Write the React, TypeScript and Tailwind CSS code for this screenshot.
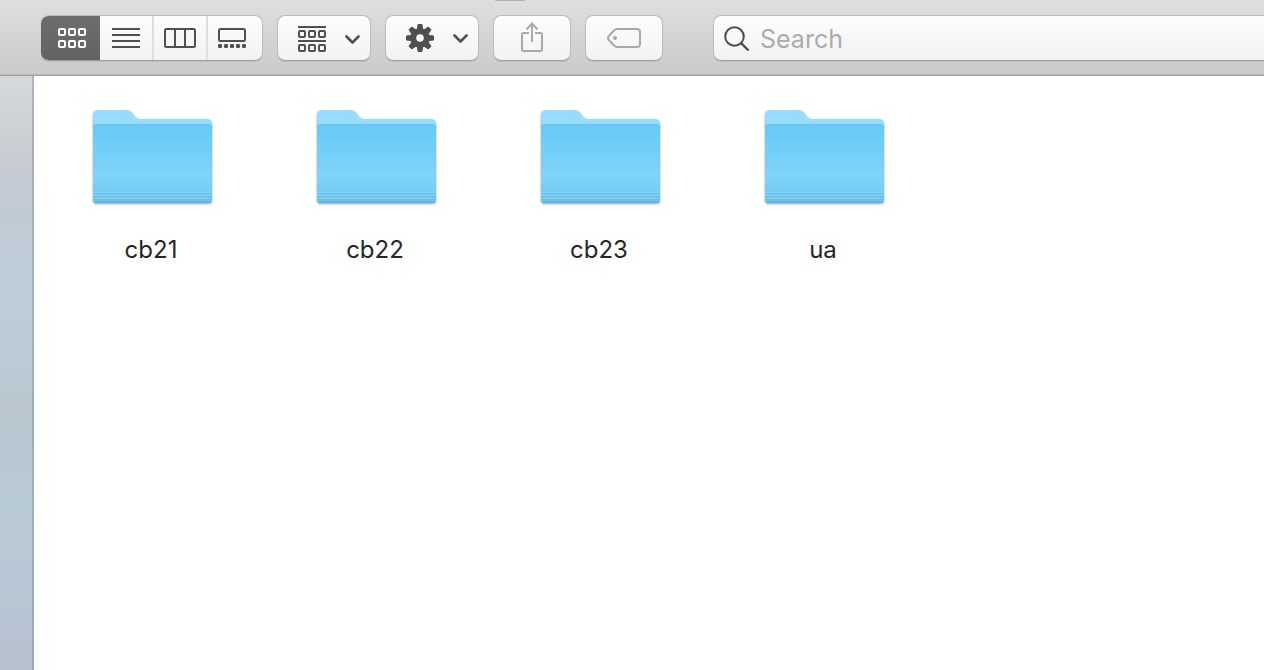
import React from "react";

const panel =
  "flex h-[46px] shrink-0 items-center rounded-lg border border-[#bcbcbc] border-b-[#a0a0a0] bg-linear-to-b from-[#fdfdfd] to-[#f2f2f2] bg-clip-padding shadow-[0_1px_1px_rgba(0,0,0,0.08)]";

function Squares({ y }: { y: number }) {
  return (
    <>
      {[1, 11, 21].map((x) => (
        <rect key={x} x={x} y={y} width="6" height="6" rx="1" />
      ))}
    </>
  );
}

function GridIcon() {
  return (
    <svg width="28" height="20" fill="none" stroke="currentColor" strokeWidth="2" aria-hidden="true">
      <Squares y={1} />
      <Squares y={13} />
    </svg>
  );
}

function ListIcon() {
  return (
    <svg width="28" height="20" stroke="currentColor" strokeWidth="2" aria-hidden="true">
      <path d="M0 1H28M0 7H28M0 13H28M0 19H28" />
    </svg>
  );
}

function ColumnsIcon() {
  return (
    <svg width="32" height="20" fill="none" stroke="currentColor" strokeWidth="2" aria-hidden="true">
      <rect x="1" y="1" width="30" height="18" rx="1.5" />
      <path d="M11 1V19M21 1V19" />
    </svg>
  );
}

function GalleryIcon() {
  return (
    <svg width="28" height="20" aria-hidden="true">
      <rect x="1" y="1" width="26" height="12" rx="1.5" fill="none" stroke="currentColor" strokeWidth="2" />
      {[0, 6, 12, 18, 24].map((x) => (
        <rect key={x} x={x} y="16" width="4" height="4" rx="1.2" fill="currentColor" />
      ))}
    </svg>
  );
}

function ArrangeIcon() {
  return (
    <svg width="28" height="26" fill="none" stroke="currentColor" strokeWidth="2" aria-hidden="true">
      <path d="M0 1H28M0 15H28" />
      <Squares y={5} />
      <Squares y={19} />
    </svg>
  );
}

function GearIcon() {
  return (
    <svg width="28" height="28" viewBox="-14 -14 28 28" aria-hidden="true">
      <circle r="6.8" fill="none" stroke="currentColor" strokeWidth="6" />
      {[0, 45, 90, 135, 180, 225, 270, 315].map((a) => (
        <path
          key={a}
          d="M-3.3 -8L-2.5 -13.3Q-2.4 -14 -1.7 -14H1.7Q2.4 -14 2.5 -13.3L3.3 -8Z"
          fill="currentColor"
          transform={`rotate(${a})`}
        />
      ))}
    </svg>
  );
}

function Chevron() {
  return (
    <svg width="16" height="10" fill="none" stroke="currentColor" strokeWidth="2.6" strokeLinecap="round" strokeLinejoin="round" aria-hidden="true">
      <path d="M2.5 2.5L8.5 8.5L14.5 2.5" />
    </svg>
  );
}

function ShareIcon() {
  return (
    <svg width="22" height="30" fill="none" stroke="currentColor" strokeWidth="2" aria-hidden="true">
      <path d="M8 11H2.5Q1 11 1 12.5V27.5Q1 29 2.5 29H19.5Q21 29 21 27.5V12.5Q21 11 19.5 11H14" />
      <path d="M11 20V1.5M5.5 7.5L11 1.5L16.5 7.5" />
    </svg>
  );
}

function TagIcon() {
  return (
    <svg width="34" height="20" fill="none" stroke="currentColor" strokeWidth="2" aria-hidden="true">
      <path d="M10.5 1H30Q33 1 33 4V16Q33 19 30 19H10.5Q8.5 19 7 17.5L2 12.3Q0 10 2 7.7L7 2.5Q8.5 1 10.5 1Z" />
      <circle cx="8" cy="10" r="2" fill="currentColor" stroke="none" />
    </svg>
  );
}

function SearchIcon() {
  return (
    <svg width="26" height="26" fill="none" stroke="currentColor" strokeWidth="2" className="shrink-0 text-[#4d4d4d]" aria-hidden="true">
      <circle cx="10.5" cy="10.5" r="9.3" />
      <path d="M17 17L24.5 24.5" strokeWidth="2.4" />
    </svg>
  );
}

function FolderIcon() {
  return (
    <svg width="122" height="98" viewBox="-2 0 122 98" aria-hidden="true">
      <defs>
        <linearGradient id="folder-front" x1="0" y1="0" x2="0" y2="1">
          <stop offset="0" stopColor="#68caf5" />
          <stop offset="0.15" stopColor="#6bcbf6" />
          <stop offset="0.65" stopColor="#7fd4fa" />
          <stop offset="0.84" stopColor="#76cdf3" />
          <stop offset="1" stopColor="#6fc5ee" />
        </linearGradient>
        <filter id="folder-shadow" x="-5%" y="-5%" width="110%" height="115%">
          <feDropShadow dx="0" dy="1" stdDeviation="0.9" floodColor="#000" floodOpacity="0.38" />
        </filter>
      </defs>
      <g filter="url(#folder-shadow)">
        <path d="M0 5Q0 0 5 0H34Q37 0 39 2.5L42.5 7Q44 9 47 9H114Q119 9 119 14V90Q119 93 116 93H3Q0 93 0 90Z" fill="#97dcfd" />
      </g>
      <path d="M0 18Q0 14 4 14H115Q119 14 119 18V90Q119 93 116 93H3Q0 93 0 90Z" fill="url(#folder-front)" />
      <path d="M0 18Q0 14.5 4 14.5H115Q119 14.5 119 18" fill="none" stroke="#60bde8" strokeOpacity="0.45" />
      <path d="M0 83.5H119M0 86.5H119M0 89.5H119" stroke="#5bb4df" strokeOpacity="0.5" />
      <path d="M0 82.5H119M0 85.5H119M0 88.5H119" stroke="#87d5f7" strokeOpacity="0.6" />
      <path d="M1 92H118" stroke="#5bb1dd" strokeOpacity="0.8" strokeWidth="2" />
    </svg>
  );
}

const folders = ["cb21", "cb22", "cb23", "ua"];

export default function App() {
  return (
    <div className="flex min-h-screen flex-col overflow-hidden bg-white font-['Inter','Liberation_Sans',sans-serif]">
      <header className="relative flex h-[76px] items-start border-b border-[#a0a0a0] bg-linear-to-b from-[#dfdfdf] to-[#cacaca] pt-[15px] pl-[41px] text-[#505050] shadow-[inset_0_-1px_0_#b8b8b8]">
        <span className="absolute top-0 left-[495px] h-px w-[30px] rounded-b-sm bg-[#b2b2b2]" />
        <div role="group" aria-label="View" className={`${panel} w-[222px] overflow-hidden border-l-0`}>
          <button aria-label="Icons" aria-pressed="true" className="-my-px flex h-[46px] w-[59px] shrink-0 items-center justify-center bg-linear-to-b from-[#6e6e6e] to-[#626262] pl-[3px] text-white">
            <GridIcon />
          </button>
          <button aria-label="List" className="flex h-full w-[54px] shrink-0 items-center justify-center border-r-2 border-[#dedede]">
            <ListIcon />
          </button>
          <button aria-label="Columns" className="flex h-full w-[54px] shrink-0 items-center justify-center border-r-2 border-[#dedede]">
            <ColumnsIcon />
          </button>
          <button aria-label="Gallery" className="flex h-full flex-1 items-center justify-center pr-1.5">
            <GalleryIcon />
          </button>
        </div>
        <button aria-label="Group items" className={`${panel} ml-3.5 w-[94px] justify-between pt-0.5 pr-2.5 pl-5`}>
          <ArrangeIcon />
          <Chevron />
        </button>
        <button aria-label="Actions" className={`${panel} ml-3.5 w-[94px] justify-between pr-2.5 pl-5`}>
          <GearIcon />
          <Chevron />
        </button>
        <button aria-label="Share" disabled className={`${panel} ml-3.5 w-[78px] justify-center pb-0.5 text-[#a9a9a9]`}>
          <ShareIcon />
        </button>
        <button aria-label="Tags" disabled className={`${panel} ml-3.5 w-[78px] justify-center text-[#a9a9a9]`}>
          <TagIcon />
        </button>
        <label className={`${panel} ml-[50px] min-w-0 flex-1 gap-2.5 rounded-r-none border-r-0 pt-0.5 pl-2.5`}>
          <SearchIcon />
          <input
            type="search"
            aria-label="Search"
            placeholder="Search"
            className="h-full min-w-0 flex-1 bg-transparent text-[25px] text-[#333] outline-none placeholder:text-[#acacac]"
          />
        </label>
      </header>
      <div className="flex flex-1">
        <aside className="w-[34px] shrink-0 border-r-2 border-[#8191a5]/50 bg-[linear-gradient(to_bottom,#d5d8dc_0%,#cccfd3_10%,#c6cad4_16%,#c0cad4_24%,#bccdd8_36%,#bbccd7_44%,#b9c6cf_56%,#b8cad5_72%,#b8c7d5_84%,#b6c0cf_100%)]" />
        <main className="flex-1 pt-[34px] pl-1.5">
          <ul className="grid grid-cols-[repeat(auto-fill,224px)]">
            {folders.map((name) => (
              <li key={name}>
                <a href={`#${name}`} className="flex flex-col items-center gap-[26px] text-2xl text-[#262626]">
                  <FolderIcon />
                  <span className="pr-0.5">{name}</span>
                </a>
              </li>
            ))}
          </ul>
        </main>
      </div>
    </div>
  );
}
